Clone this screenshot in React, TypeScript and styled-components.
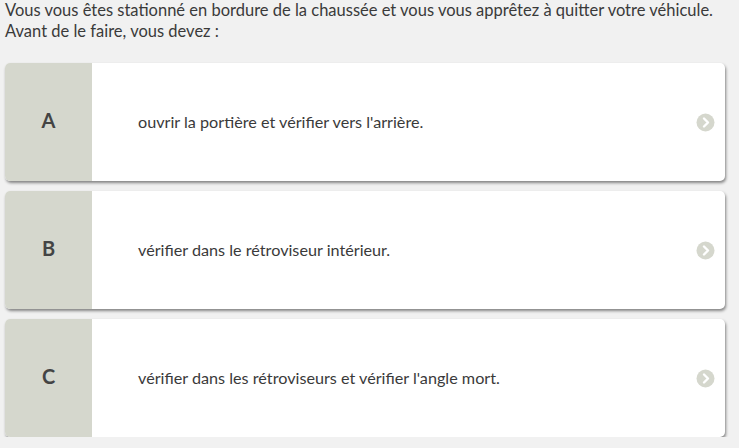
import styled, { createGlobalStyle } from 'styled-components'

const GlobalStyle = createGlobalStyle`
  html, body {
    margin: 0;
    background: #f1f1f1;
    font-family: Lato, "Liberation Sans", sans-serif;
  }
`

const Page = styled.div`
  padding: 0 14px 0 5px;
`

const Question = styled.p`
  margin: 0;
  font-size: 16.5px;
  line-height: 21px;
  color: #3a3a3a;
`

const Answers = styled.div`
  display: flex;
  flex-direction: column;
  gap: 10px;
  margin-top: 21px;
`

const Card = styled.div`
  display: flex;
  height: 118px;
  background: #fff;
  border-radius: 5px;
  overflow: hidden;
  box-shadow: 1px 2px 3px rgba(0, 0, 0, 0.45);
  cursor: pointer;
`

const Letter = styled.div`
  flex: 0 0 87px;
  display: flex;
  align-items: center;
  justify-content: center;
  padding-bottom: 5px;
  background: #d5d7cd;
  color: #444;
  font-size: 20px;
  font-weight: 700;
`

const Label = styled.div`
  flex: 1;
  display: flex;
  align-items: center;
  padding-left: 46px;
  padding-bottom: 2px;
  font-size: 16.2px;
  color: #3a3a3a;
`

const Arrow = styled.div`
  display: flex;
  align-items: center;
  padding-right: 10px;
`

const Chevron = () => (
  <svg width="19" height="19" viewBox="0 0 19 19">
    <circle cx="9.5" cy="9.5" r="9" fill="#d5d7cd" />
    <path d="M8 5.5 L12 9.5 L8 13.5" fill="none" stroke="#fff" strokeWidth="2.4" strokeLinecap="round" strokeLinejoin="round" />
  </svg>
)

const answers = [
  { key: 'A', text: "ouvrir la portière et vérifier vers l'arrière." },
  { key: 'B', text: 'vérifier dans le rétroviseur intérieur.' },
  { key: 'C', text: "vérifier dans les rétroviseurs et vérifier l'angle mort." },
]

export default function App() {
  return (
    <Page>
      <GlobalStyle />
      <Question>
        Vous vous êtes stationné en bordure de la chaussée et vous vous apprêtez à quitter votre véhicule.
        <br />
        Avant de le faire, vous devez :
      </Question>
      <Answers>
        {answers.map((a) => (
          <Card key={a.key}>
            <Letter>{a.key}</Letter>
            <Label>{a.text}</Label>
            <Arrow>
              <Chevron />
            </Arrow>
          </Card>
        ))}
      </Answers>
    </Page>
  )
}
